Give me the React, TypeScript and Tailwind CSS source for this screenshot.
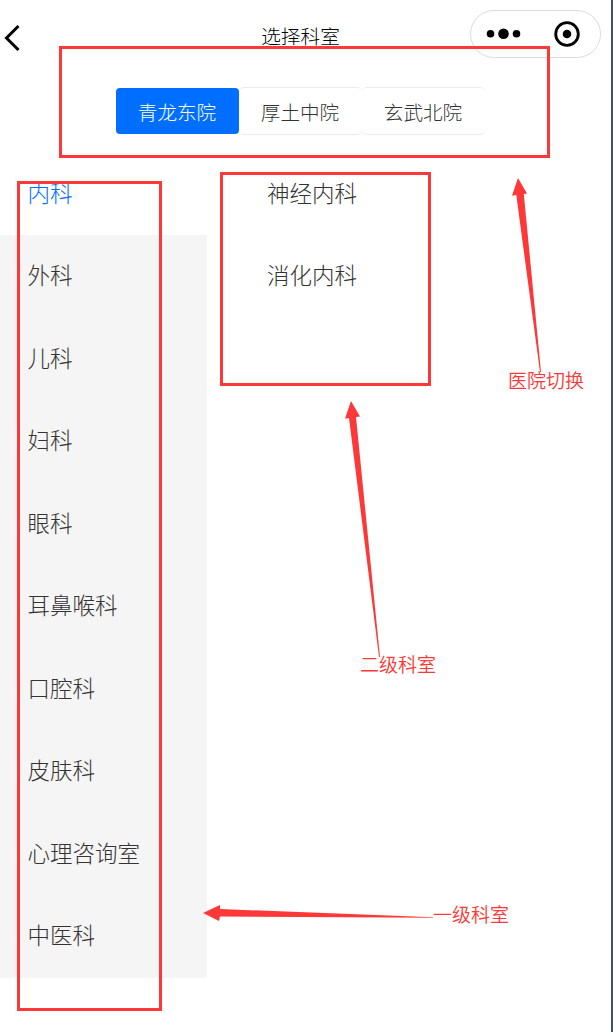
const hospitals = ["青龙东院", "厚土中院", "玄武北院"];
const departments = ["内科", "外科", "儿科", "妇科", "眼科", "耳鼻喉科", "口腔科", "皮肤科", "心理咨询室", "中医科"];
const clinics = ["神经内科", "消化内科"];

function Header() {
  return (
    <header className="grid h-[70px] grid-cols-[1fr_auto_1fr] items-center pr-[10px] pb-[2px]">
      <svg className="ml-[3px] h-[30px] w-[20px] translate-y-1" viewBox="0 0 20 30" fill="none">
        <path d="M15.5 3 3.5 15l12 12" stroke="#000" strokeWidth="3" />
      </svg>
      <h1 className="pt-[4px] text-[19.7px] leading-[30px] text-black">选择科室</h1>
      <div className="flex h-[48px] w-[131px] justify-self-end rounded-full border border-[#dcdcdc]">
        <svg className="h-[46px] w-[129px]" viewBox="0 0 129 46">
          <circle cx="19.5" cy="22.7" r="3.8" />
          <circle cx="32.5" cy="22.7" r="5.3" />
          <circle cx="45.5" cy="22.7" r="3.8" />
          <circle cx="96" cy="23" r="11.3" fill="none" stroke="#000" strokeWidth="2.8" />
          <circle cx="96" cy="23" r="4.3" />
        </svg>
      </div>
    </header>
  );
}

function HospitalTabs() {
  return (
    <nav className="flex h-[82.5px] items-start justify-center pt-[17px] pr-[11px]">
      {hospitals.map((name, i) => (
        <button
          key={name}
          className={
            i === 0
              ? "mt-px h-[46px] w-[123px] rounded-[4px] bg-[#006fff] pt-[2px] text-[19.6px] leading-[30px] text-white"
              : "h-[48px] w-[123px] rounded-[5px] border-y border-[#ebebeb] pt-[2px] text-[19.6px] leading-[30px] text-[#333]"
          }
        >
          {name}
        </button>
      ))}
    </nav>
  );
}

function Annotations() {
  return (
    <div className="pointer-events-none absolute inset-0 font-[350] text-[#fc3838]">
      <div className="absolute top-[46px] left-[59px] h-[112px] w-[491px] border-3 border-[#fc3838]" />
      <div className="absolute top-[181px] left-[17px] h-[830px] w-[145px] border-3 border-[#fc3838]" />
      <div className="absolute top-[172px] left-[220px] h-[214px] w-[211px] border-3 border-[#fc3838]" />
      <svg className="absolute inset-0 h-[1032px] w-[613px]" viewBox="0 0 613 1032" fill="#fc3838">
        <path d="M518 178l9 15.5-3.2.4L541 372h-1L516.3 195l-4.3.7z" />
        <path d="M351 401l9 15.5-4 .5L380 657h-1L349 418l-4 .8z" />
        <path d="M203 913l17-8v4l213 8.3v.5l-213-1.2-1 4.4z" />
      </svg>
      <span className="absolute top-[365px] left-[508px] text-[19px] leading-[30px] whitespace-nowrap">医院切换</span>
      <span className="absolute top-[649px] left-[360px] text-[19px] leading-[30px] whitespace-nowrap">二级科室</span>
      <span className="absolute top-[899px] left-[433px] text-[19px] leading-[30px] whitespace-nowrap">一级科室</span>
    </div>
  );
}

export default function App() {
  return (
    <div className="relative h-[1032px] w-[613px] overflow-hidden border-r-2 border-[#3b5667] bg-white font-['Noto_Sans_CJK_SC',sans-serif] font-light">
      <Header />
      <HospitalTabs />
      <main className="flex gap-[60px]">
        <ul className="w-[207px]">
          {departments.map((name, i) => (
            <li
              key={name}
              className={
                i === 0
                  ? "flex h-[82.5px] items-center pb-[2px] pl-[27.5px] text-[22.5px] text-[#006fff]"
                  : "flex h-[82.5px] items-center bg-[#f5f5f5] pb-[2px] pl-[27.5px] text-[22.5px] text-[#333]"
              }
            >
              {name}
            </li>
          ))}
        </ul>
        <ul>
          {clinics.map((name) => (
            <li key={name} className="flex h-[82.5px] items-center pb-[2px] text-[22.5px] text-[#333]">
              {name}
            </li>
          ))}
        </ul>
      </main>
      <Annotations />
    </div>
  );
}
